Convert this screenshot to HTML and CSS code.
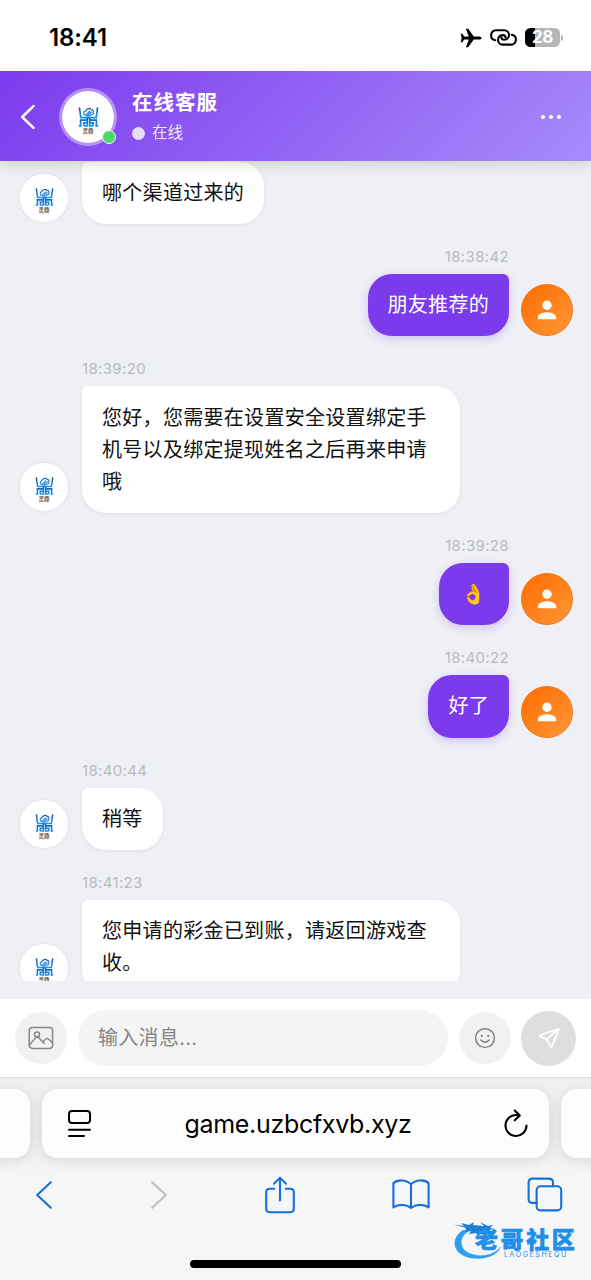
FILE: index.html
```
<!DOCTYPE html>
<html lang="zh-CN">
<head>
<meta charset="utf-8">
<title>在线客服</title>
<link rel="stylesheet" href="styles.css">
</head>
<body>
<svg class="defs" width="0" height="0">
  <defs>
    <linearGradient id="blue" x1="0" y1="0" x2="0" y2="1"><stop offset="0" stop-color="#155dab"/><stop offset="1" stop-color="#1b93f2"/></linearGradient>
    <symbol id="ding" viewBox="0 0 20 20">
      <g fill="none" stroke="url(#blue)" stroke-width="1.7">
        <path d="M.9 .5 2.3 10.6H17.7L19.1 .5"/>
        <path d="M8.8 13.2H2.1V18.6M.3 18.8H3.2M5.3 18.8H8.8V10.8M5.3 18.8V15.8H8.8"/>
        <path d="M11.2 13.2H17.9V18.6M19.7 18.8H16.8M14.7 18.8H11.2V10.8M14.7 18.8V15.8H11.2"/>
        <path stroke-width="1.2" d="M7.2 8.2C4.5 8.2 4.6 4.6 7 4.2C8 1 12 1 12.8 2.6C16 2.8 15.5 7.5 13 7.6C12 9.6 8.5 9.4 7.2 8.2L11.5 4M8.8 8.8 13.3 4.8"/>
      </g>
    </symbol>
    <symbol id="person" viewBox="0 0 20 20"><circle cx="10" cy="5.2" r="4.7"/><path d="M.8 19.2V17.8C.8 14.4 5 12.2 10 12.2S19.2 14.4 19.2 17.8V19.2Z"/></symbol>
  </defs>
</svg>
<div class="screen">
  <div class="status">
    <span class="clock">18:41</span>
    <div class="status-icons">
      <svg width="22" height="20" viewBox="0 0 22 20"><path d="M21.6 10C21.6 8.9 20.2 8.4 18.4 8.4H13.8L8.2 .7H5.9L8.8 8.4H4.3L2.3 5.8H.6L1.7 10 .6 14.2H2.3L4.3 11.6H8.8L5.9 19.3H8.2L13.8 11.6H18.4C20.2 11.6 21.6 11.1 21.6 10Z"/></svg>
      <svg class="link" width="27" height="17" viewBox="0 0 27 17"><g fill="none" stroke="#000" stroke-width="2.1" stroke-linecap="round"><path d="M5.2 11.2C2.5 10.8 1.1 8.8 1.1 6.5C1.1 3.6 3 1.3 6 1.3H14.2C17 1.3 19 3.4 19 6S17 10.8 14.4 10.8C12.6 10.8 11.5 9.8 11.3 8.4"/><path d="M21.8 5.7C24.5 6.1 25.9 8.1 25.9 10.4C25.9 13.3 24 15.6 21 15.6H12.8C10 15.6 8 13.5 8 10.9S10 6.1 12.6 6.1C14.4 6.1 15.5 7.1 15.7 8.5"/></g></svg>
      <span class="battery">28</span><i class="battery-cap"></i>
    </div>
  </div>

  <header class="header">
    <svg class="back" width="16" height="26" viewBox="0 0 16 26"><path d="M13.5 2.2 2.2 13 13.5 23.8"/></svg>
    <div class="agent-pic"><svg width="21" height="20"><use href="#ding"/></svg><small>灵鼎</small><i class="online"></i></div>
    <div class="agent">
      <h1>在线客服</h1>
      <p><i></i>在线</p>
    </div>
    <div class="more"><i></i><i></i><i></i></div>
  </header>

  <main class="chat">
    <div class="msg">
      <div class="avatar"><svg width="19" height="18"><use href="#ding"/></svg><small>灵鼎</small></div>
      <div class="body"><div class="bubble">哪个渠道过来的</div></div>
    </div>
    <div class="msg me">
      <div class="avatar"><svg width="20" height="20"><use href="#person"/></svg></div>
      <div class="body"><time>18:38:42</time><div class="bubble">朋友推荐的</div></div>
    </div>
    <div class="msg">
      <div class="avatar"><svg width="19" height="18"><use href="#ding"/></svg><small>灵鼎</small></div>
      <div class="body"><time>18:39:20</time><div class="bubble">您好，您需要在设置安全设置绑定手机号以及绑定提现姓名之后再来申请哦</div></div>
    </div>
    <div class="msg me">
      <div class="avatar"><svg width="20" height="20"><use href="#person"/></svg></div>
      <div class="body"><time>18:39:28</time><div class="bubble emoji">👌</div></div>
    </div>
    <div class="msg me">
      <div class="avatar"><svg width="20" height="20"><use href="#person"/></svg></div>
      <div class="body"><time>18:40:22</time><div class="bubble">好了</div></div>
    </div>
    <div class="msg">
      <div class="avatar"><svg width="19" height="18"><use href="#ding"/></svg><small>灵鼎</small></div>
      <div class="body"><time>18:40:44</time><div class="bubble">稍等</div></div>
    </div>
    <div class="msg">
      <div class="avatar"><svg width="19" height="18"><use href="#ding"/></svg><small>灵鼎</small></div>
      <div class="body"><time>18:41:23</time><div class="bubble">您申请的彩金已到账，请返回游戏查收。</div></div>
    </div>
  </main>

  <div class="composer">
    <div class="round"><svg width="26" height="24" viewBox="0 0 26 24"><g fill="none" stroke="#858688" stroke-width="1.5" stroke-linejoin="round"><rect x="1.2" y="1.4" width="23.4" height="21" rx="3.2"/><circle cx="9" cy="8.6" r="2.5"/><path d="M1.4 19.2 7.6 11.6Q9 10.2 10.5 11.6L16.5 17.8M14.6 15.8 18 13Q19.4 12 20.8 13.2L24.4 16.6"/></g></svg></div>
    <div class="field">输入消息...</div>
    <div class="round"><svg width="22" height="22" viewBox="0 0 22 22"><circle cx="11" cy="11" r="9.4" fill="none" stroke="#77787a" stroke-width="1.4"/><circle cx="7.8" cy="8.8" r="1.1" fill="#77787a"/><circle cx="14.2" cy="8.8" r="1.1" fill="#77787a"/><path d="M6.8 13Q11 17.4 15.2 13" fill="none" stroke="#77787a" stroke-width="1.4" stroke-linecap="round"/></svg></div>
    <div class="send"><svg width="24" height="23" viewBox="0 0 24 23"><path d="M22 1.5 2.2 8.5 9.6 12.6 14.6 20.6ZM9.6 12.6 22 1.5" fill="none" stroke="#fff" stroke-width="1.8" stroke-linejoin="round"/></svg></div>
  </div>

  <footer class="browser">
    <div class="tabs">
      <div class="tab side"></div>
      <div class="tab current">
        <svg width="26" height="30" viewBox="0 0 26 30"><g fill="none" stroke="#000" stroke-width="2" stroke-linecap="round"><rect x="2" y="2" width="21" height="12" rx="3"/><path d="M2 20.7H23M2 27H17"/></g></svg>
        <span class="url">game.uzbcfxvb.xyz</span>
        <svg width="26" height="30" viewBox="0 0 26 30"><g fill="none" stroke="#000" stroke-width="2.1" stroke-linecap="round" stroke-linejoin="round"><path d="M15.7 6.4A10.5 10.5 0 1 0 23.5 16.6"/><path d="M11.7 1.5 16.8 6.6 11.7 11.3"/></g></svg>
      </div>
      <div class="tab side"></div>
    </div>
    <nav class="tools">
      <svg width="18" height="30" viewBox="0 0 18 30"><path d="M15.8 2.2 2.2 15 15.8 27.8"/></svg>
      <svg class="off" width="18" height="30" viewBox="0 0 18 30"><path d="M2.2 2.2 15.8 15 2.2 27.8"/></svg>
      <svg width="30" height="38" viewBox="0 0 30 38"><path d="M9.3 12.7H4.8Q1.2 12.7 1.2 16.3V32.6Q1.2 36.2 4.8 36.2H25.2Q28.8 36.2 28.8 32.6V16.3Q28.8 12.7 25.2 12.7H20.7M15 24.4V1.7M9 7.7 15 1.7 21 7.7"/></svg>
      <svg width="38" height="32" viewBox="0 0 38 32"><path d="M19 5.4C14.5.3 5 .3 1.4 4.3V28.4C6 25 14.8 25 19 29C23.2 25 32 25 36.6 28.4V4.3C33 .3 23.5.3 19 5.4ZM19 5.4V29"/></svg>
      <svg width="36" height="36" viewBox="0 0 36 36"><rect x="9.6" y="9.2" width="24.6" height="24.2" rx="4"/><path d="M9.6 25.9H5.6Q1.6 25.9 1.6 21.9V5.6Q1.6 1.6 5.6 1.6H22Q26 1.6 26 5.6V9.2"/></svg>
    </nav>
    <div class="home"></div>
    <div class="watermark">
      <svg width="52" height="40" viewBox="0 0 52 40"><path d="M9 9C-3 17-2 30 11 35.5C26 41 44 36 48 24C42 34 26 37 15 32C5 27 5 16 15 10Z" fill="#2f9ff2"/><path d="M0 3.5 10 5 7 2 15 4 20 1 19 4 30 5 26 1 34 5 39 4 36 7 40 8 35 9 39 11 32 10 35 14 28 12 24 15 22 12 15 13 17 10 11 11 12 7Z" fill="#1a80d8"/></svg>
      <div class="mark-text"><b>老哥社区</b><span>LAOGESHEQU</span></div>
    </div>
  </footer>
</div>
</body>
</html>
```
FILE: styles.css
```
* { box-sizing: border-box; }
body { margin: 0; font-family: Inter, "Noto Sans CJK SC", sans-serif; color: #111; }
i { font-style: normal; }
svg { display: block; flex: none; }
.defs { position: absolute; }
.screen { width: 591px; height: 1280px; display: flex; flex-direction: column; overflow: hidden; background: #eff0f5; }

.status { height: 71px; flex: none; background: #fff; display: flex; justify-content: space-between; align-items: center; padding: 4px 28px 0 49px; }
.clock { font-size: 24px; font-weight: 600; color: #000; letter-spacing: -.1px; }
.status-icons { display: flex; align-items: center; }
.link { margin-left: 8px; }
.battery { width: 35px; height: 19px; margin-left: 8px; border-radius: 5.5px; background: linear-gradient(90deg, #000 10px, #b6b6b6 10px); color: #fff; font-size: 17px; line-height: 19px; font-weight: 700; text-align: center; letter-spacing: -.3px; }
.battery-cap { width: 2px; height: 6px; margin-left: 1px; border-radius: 0 2px 2px 0; background: #b6b6b6; }

.header { height: 90px; flex: none; z-index: 1; display: flex; align-items: center; padding: 1px 30px 0 20px; background: linear-gradient(135deg, #7c3aed, #a78bfa); box-shadow: 0 4px 12px rgba(0,0,0,.13); color: #fff; }
.back path { fill: none; stroke: #fff; stroke-width: 2.5; stroke-linecap: round; stroke-linejoin: round; }
.agent-pic { width: 58px; height: 58px; margin-left: 23px; position: relative; border-radius: 50%; border: 3px solid rgba(255,255,255,.4); background: #fff; background-clip: padding-box; display: flex; flex-direction: column; align-items: center; padding-top: 16px; }
.agent-pic small, .avatar small { font-size: 5.5px; line-height: 7px; margin-top: 1px; color: #333; font-weight: 500; }
.online { position: absolute; right: -2px; bottom: -1px; width: 14px; height: 14px; border-radius: 50%; border: 1.5px solid #fff; background: #4cd964; }
.agent { margin-left: 15px; flex: 1; }
.agent h1 { margin: 0; font-size: 20.5px; line-height: 30px; font-weight: 700; letter-spacing: 1px; }
.agent p { margin: 3px 0 0; display: flex; align-items: center; gap: 7px; font-size: 15.5px; line-height: 24px; color: rgba(255,255,255,.88); }
.agent p i { width: 13px; height: 13px; border-radius: 50%; background: rgba(255,255,255,.8); }
.more { display: flex; gap: 4px; }
.more i { width: 4px; height: 4px; border-radius: 50%; background: #fff; }

.chat { height: 820px; flex: none; overflow: hidden; display: flex; flex-direction: column; gap: 23px; padding: .7px 18px 0; }
.msg { display: flex; align-items: flex-end; gap: 12px; flex: none; }
.msg.me { flex-direction: row-reverse; }
.body { display: flex; flex-direction: column; align-items: flex-start; max-width: 378px; }
.me .body { align-items: flex-end; }
time { font-size: 15px; line-height: 19px; margin-bottom: 8px; color: #b9babf; letter-spacing: .35px; }
.bubble { padding: 15.2px 20px; font-size: 20px; line-height: 32px; letter-spacing: .3px; background: #fff; border-radius: 6px 24px 24px 24px; box-shadow: 0 1px 4px rgba(0,0,0,.07); }
.me .bubble { background: #7c3aed; color: #fff; border-radius: 24px 6px 24px 24px; box-shadow: 0 3px 10px rgba(124,58,237,.25); }
.me .emoji { width: 70px; padding-left: 0; padding-right: 0; text-align: center; }
.avatar { width: 52px; height: 52px; flex: none; border-radius: 50%; background: #fff; border: 2px solid #e9eaed; display: flex; flex-direction: column; align-items: center; padding-top: 14px; }
.me .avatar { border: 1px solid #f5730c; background: linear-gradient(135deg, #ff6b00, #ff9838); justify-content: center; padding: 0; color: #fff; fill: #fff; }

.composer { margin-top: 18px; height: 78px; flex: none; background: #fff; display: flex; align-items: center; padding: 0 15px; gap: 11px; }
.round { width: 52px; height: 52px; flex: none; border-radius: 50%; background: #f0f1f3; display: grid; place-items: center; }
.field { flex: 1; height: 56px; border-radius: 28px; background: #f4f4f4; color: #858585; font-size: 20px; line-height: 56px; padding: 0 20px; letter-spacing: .3px; }
.send { width: 55px; height: 55px; flex: none; margin-left: -1px; border-radius: 50%; background: #dedede; display: grid; place-items: center; }

.browser { flex: 1; position: relative; border-top: 1px solid #d9d9d9; background: linear-gradient(#efefef, #eaeaea 55px, #f6f6f6 100px); display: flex; flex-direction: column; overflow: hidden; }
.tabs { display: flex; gap: 12px; margin: 11px -40px 0; justify-content: center; }
.tab { height: 69px; flex: none; border-radius: 16px; background: #fdfdfd; box-shadow: 0 3px 12px rgba(0,0,0,.09); }
.side { width: 70px; }
.current { width: 507px; display: flex; align-items: center; justify-content: space-between; padding: 0 20px 0 25px; }
.url { font-size: 25px; color: #000; letter-spacing: -.3px; }
.tools { display: flex; align-items: center; justify-content: space-between; height: 38px; margin: 18px 28px 0 35px; }
.tools path, .tools rect { fill: none; stroke: #1670dc; stroke-width: 2.1; stroke-linecap: round; stroke-linejoin: round; }
.tools .off path { stroke: #bdbdbf; }
.home { width: 211px; height: 8px; border-radius: 4px; background: #000; position: absolute; left: 190px; bottom: 12px; }
.watermark { position: absolute; left: 454px; top: 143px; display: flex; }
.mark-text { margin: 8px 0 0 -31px; display: flex; flex-direction: column; color: #218fe8; }
.mark-text b { font-size: 23px; line-height: 23px; font-weight: 900; letter-spacing: 2.6px; -webkit-text-stroke: .6px #218fe8; }
.mark-text span { font: 7px/7px Inter, sans-serif; letter-spacing: 1.6px; margin: -1px 0 0 29px; }
```
